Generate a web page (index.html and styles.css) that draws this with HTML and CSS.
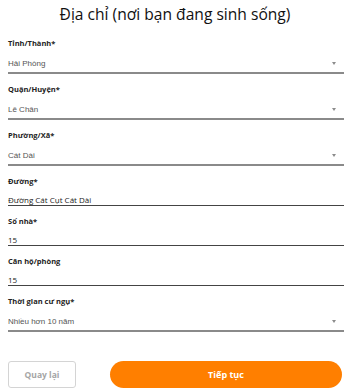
FILE: index.html
```html
<!DOCTYPE html>
<html lang="vi">
<head>
<meta charset="utf-8">
<title>Địa chỉ</title>
<link rel="stylesheet" href="styles.css">
</head>
<body>
<div class="page">
  <h1 class="title">Địa chỉ (nơi bạn đang sinh sống)</h1>
  <form class="form">
    <div class="field field-select">
      <label class="label">Tỉnh/Thành*</label>
      <div class="select"><span class="select-value">Hải Phòng</span><span class="arrow"></span></div>
    </div>
    <div class="field field-select">
      <label class="label">Quận/Huyện*</label>
      <div class="select"><span class="select-value">Lê Chân</span><span class="arrow"></span></div>
    </div>
    <div class="field field-select">
      <label class="label">Phường/Xã*</label>
      <div class="select"><span class="select-value">Cát Dài</span><span class="arrow"></span></div>
    </div>
    <div class="field field-text">
      <label class="label">Đường*</label>
      <div class="input">Đường Cát Cụt Cát Dài</div>
    </div>
    <div class="field field-text">
      <label class="label">Số nhà*</label>
      <div class="input">15</div>
    </div>
    <div class="field field-text">
      <label class="label">Căn hộ/phòng</label>
      <div class="input">15</div>
    </div>
    <div class="field field-select">
      <label class="label">Thời gian cư ngụ*</label>
      <div class="select"><span class="select-value">Nhiều hơn 10 năm</span><span class="arrow"></span></div>
    </div>
    <div class="actions">
      <button type="button" class="btn btn-back">Quay lại</button>
      <button type="button" class="btn btn-next">Tiếp tục</button>
    </div>
  </form>
</div>
</body>
</html>
```
FILE: styles.css
```css
html, body {
  margin: 0;
  padding: 0;
  background: #ffffff;
}
body {
  font-family: "Open Sans", "Noto Sans", sans-serif;
  color: #222;
}
.page {
  width: 350px;
}
.title {
  margin: 0;
  padding-top: 4px;
  font-size: 15.6px;
  line-height: 21px;
  font-weight: 400;
  text-align: center;
  color: #111;
}
.form {
  display: flex;
  flex-direction: column;
  gap: 6px;
  padding: 12px 6px 0 8px;
}
.field {
  display: flex;
  flex-direction: column;
  padding-bottom: 3px;
}
.label {
  font-size: 7.5px;
  line-height: 12px;
  font-weight: 700;
  color: #222;
}
.select {
  margin-top: 6px;
  height: 17px;
  display: flex;
  align-items: center;
  justify-content: space-between;
  padding-right: 8px;
  border-bottom: 2px solid #8a8a8a;
}
.select-value {
  font-family: "Liberation Sans", Arial, sans-serif;
  font-size: 8px;
  color: #555;
}
.arrow {
  width: 0;
  height: 0;
  border-left: 2.5px solid transparent;
  border-right: 2.5px solid transparent;
  border-top: 3px solid #8c8c8c;
}
.input {
  margin-top: 8px;
  font-size: 8px;
  line-height: 10px;
  height: 10px;
  color: #1a1a1a;
  border-bottom: 1px solid #444;
}
.actions {
  display: flex;
  gap: 34px;
  margin-top: 20px;
  padding-right: 2px;
}
.btn {
  height: 27px;
  padding: 0;
  font-family: "Open Sans", "Noto Sans", sans-serif;
  font-weight: 700;
  cursor: pointer;
}
.btn-back {
  width: 68px;
  background: #fff;
  border: 1px solid #d4d4d4;
  border-radius: 3px;
  color: #a5a5a5;
  font-size: 8.5px;
}
.btn-next {
  flex: 1;
  background: #ff7f00;
  border: none;
  border-radius: 14px;
  color: #fff;
  font-size: 9px;
}
```
